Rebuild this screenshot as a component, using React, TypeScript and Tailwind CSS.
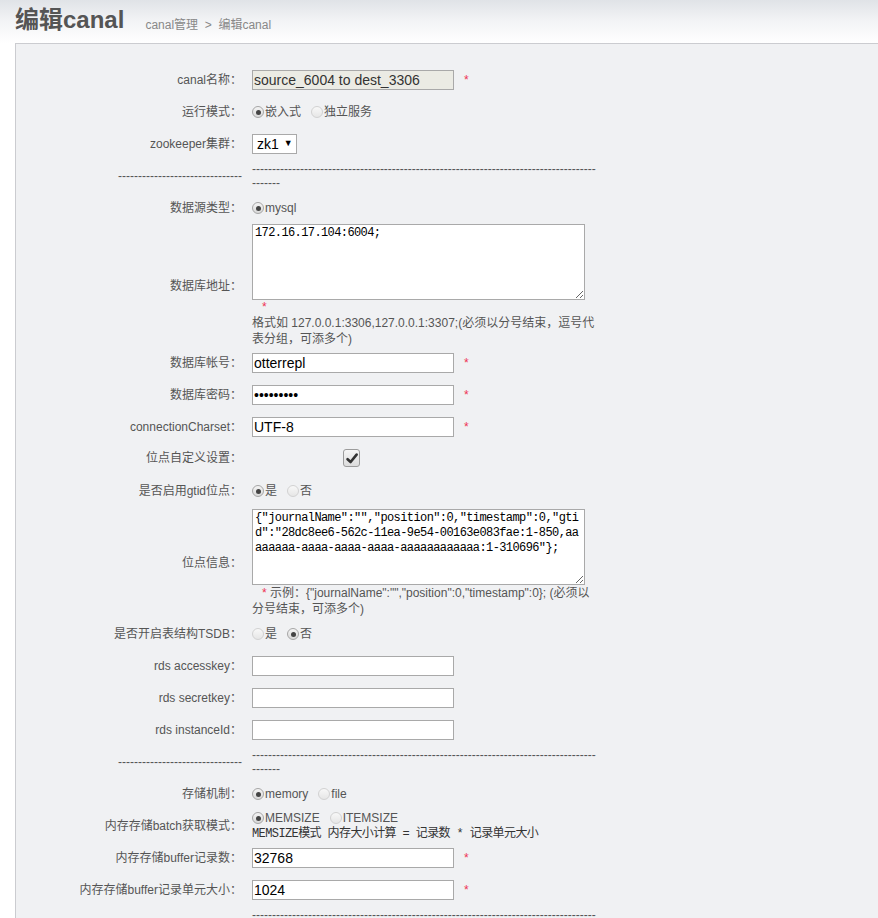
import React from 'react';

const sans = "font-['Liberation_Sans','Noto_Sans_CJK_SC',sans-serif]";
const mono = "font-['Liberation_Mono','Noto_Sans_CJK_SC',monospace]";

const Star = ({ className = '' }: { className?: string }) => (
  <span className={`text-[12px] text-[#ee3355] ${className}`}>*</span>
);

const Radio = ({ checked = false }: { checked?: boolean }) => (
  <span
    className={`inline-flex h-[12px] w-[12px] shrink-0 items-center justify-center rounded-full border ${
      checked
        ? 'border-[#a6a6a6] bg-linear-to-b from-[#f4f4f4] to-[#d9d9d9]'
        : 'border-[#d2d2d2] bg-linear-to-b from-[#f8f8f8] to-[#e6e6e6]'
    }`}
  >
    {checked && <span className="h-[5px] w-[5px] rounded-full bg-[#444]" />}
  </span>
);

const RadioOpt = ({ label, checked = false }: { label: string; checked?: boolean }) => (
  <span className="mr-[10px] inline-flex items-center">
    <Radio checked={checked} />
    <span className="ml-px">{label}</span>
  </span>
);

type RowProps = {
  label: React.ReactNode;
  children: React.ReactNode;
  className?: string;
};

const Row = ({ label, children, className = 'py-[6px]' }: RowProps) => (
  <div className={`flex items-center ${className}`}>
    <div className="w-[226px] shrink-0 text-right leading-[20px]">{label}</div>
    <div className="ml-[10px] w-[346px] shrink-0">{children}</div>
  </div>
);

const TextInput = ({ value = '', disabled = false }: { value?: string; disabled?: boolean }) => (
  <input
    readOnly
    value={value}
    className={`h-[20px] w-[202px] border border-[#a9a9a9] px-px text-[14px] outline-none ${sans} ${
      disabled ? 'bg-[#ebebe4] text-[#333]' : 'bg-white text-black'
    }`}
  />
);

const InputRow = ({ label, value, star = false, disabled = false }: { label: string; value?: string; star?: boolean; disabled?: boolean }) => (
  <Row label={label}>
    <div className="flex items-center">
      <TextInput value={value} disabled={disabled} />
      {star && <Star className="ml-[10px]" />}
    </div>
  </Row>
);

const Separator = () => (
  <Row label="-------------------------------" className="py-[2px]">
    <div className="whitespace-nowrap leading-[14px]">
      {'-'.repeat(86)}
      <br />
      {'-'.repeat(7)}
    </div>
  </Row>
);

const positionJson =
  '{"journalName":"","position":0,"timestamp":0,"gtid":"28dc8ee6-562c-11ea-9e54-00163e083fae:1-850,aaaaaaaa-aaaa-aaaa-aaaa-aaaaaaaaaaaa:1-310696"};';

const textareaCls = `block h-[76px] w-[333px] break-all border border-[#a9a9a9] bg-white px-[2px] py-px text-[12px] leading-[15px] tracking-[-0.6px] text-black outline-none ${mono}`;

export default function App() {
  return (
    <div className={`min-h-screen w-full bg-white text-[12px] text-[#555] ${sans}`}>
      <div className="flex h-[43px] items-start bg-linear-to-b from-[#e0e3e7] via-[#f3f4f6] to-white pl-[15px] pt-[8px]">
        <h1 className="text-[24px] font-bold leading-[24px] text-[#555]">编辑canal</h1>
        <span className="ml-[21px] mt-[9px] text-[12px] leading-[16px] text-[#888]">canal管理{'\u00a0 >\u00a0 '}编辑canal</span>
      </div>

      <div className="ml-[15px] border-l border-t border-[#cbccd0] bg-[#f0f1f3] pb-[40px] pt-[20px]">
        <InputRow label="canal名称：" value="source_6004 to dest_3306" disabled star />

        <Row label="运行模式：">
          <div className="flex items-center leading-[20px]">
            <RadioOpt checked label="嵌入式" />
            <RadioOpt label="独立服务" />
          </div>
        </Row>

        <Row label="zookeeper集群：">
          <div className="flex h-[20px] w-[45px] items-center border border-[#a9a9a9] bg-white pl-[4px] text-[14px] text-black">
            zk1
            <span className="ml-[5px] text-[9px]">▼</span>
          </div>
        </Row>

        <Separator />

        <Row label="数据源类型：">
          <div className="flex items-center leading-[20px]">
            <RadioOpt checked label="mysql" />
          </div>
        </Row>

        <Row label="数据库地址：" className="py-0">
          <textarea readOnly value="172.16.17.104:6004;" className={textareaCls} />
          <div className="h-[15px] pl-[10px] leading-[15px]">
            <Star />
          </div>
          <div className="leading-[16px]">
            格式如 127.0.0.1:3306,127.0.0.1:3307;(必须以分号结束，逗号代表分组，可添多个)
          </div>
        </Row>

        <InputRow label="数据库帐号：" value="otterrepl" star />
        <InputRow label="数据库密码：" value="•••••••••" star />
        <InputRow label="connectionCharset：" value="UTF-8" star />

        <Row label="位点自定义设置：" className="pb-[7px] pt-[5px]">
          <span className="ml-[91px] flex h-[18px] w-[17px] items-center justify-center rounded-[3px] border border-[#9c9c9c] bg-linear-to-b from-[#f6f6f6] to-[#dcdcdc]">
            <svg width="12" height="11" viewBox="0 0 12 11">
              <path d="M1.6 6.2 L4.6 9 L10.6 1.6" fill="none" stroke="#333" strokeWidth="2.6" strokeLinecap="round" strokeLinejoin="round" />
            </svg>
          </span>
        </Row>

        <Row label="是否启用gtid位点：">
          <div className="flex items-center leading-[20px]">
            <RadioOpt checked label="是" />
            <RadioOpt label="否" />
          </div>
        </Row>

        <Row label="位点信息：" className="pb-px pt-[2px]">
          <textarea readOnly value={positionJson} className={textareaCls} />
          <div className="leading-[16px]">
            <Star className="ml-[10px]" /> {'示例：{"journalName":"","position":0,"timestamp":0}; (必须以分号结束，可添多个)'}
          </div>
        </Row>

        <Row label="是否开启表结构TSDB：">
          <div className="flex items-center leading-[20px]">
            <RadioOpt label="是" />
            <RadioOpt checked label="否" />
          </div>
        </Row>

        <InputRow label="rds accesskey：" />
        <InputRow label="rds secretkey：" />
        <InputRow label="rds instanceId：" />

        <Separator />

        <Row label="存储机制：">
          <div className="flex items-center leading-[20px]">
            <RadioOpt checked label="memory" />
            <RadioOpt label="file" />
          </div>
        </Row>

        <Row label="内存存储batch获取模式：" className="py-0">
          <div className="flex items-center leading-[16px]">
            <RadioOpt checked label="MEMSIZE" />
            <RadioOpt label="ITEMSIZE" />
          </div>
          <div className={`leading-[16px] tracking-[-0.6px] text-[#333] ${mono}`}>
            MEMSIZE模式 内存大小计算 = 记录数 * 记录单元大小
          </div>
        </Row>

        <InputRow label="内存存储buffer记录数：" value="32768" star />
        <InputRow label="内存存储buffer记录单元大小：" value="1024" star />

        <Separator />
      </div>
    </div>
  );
}
